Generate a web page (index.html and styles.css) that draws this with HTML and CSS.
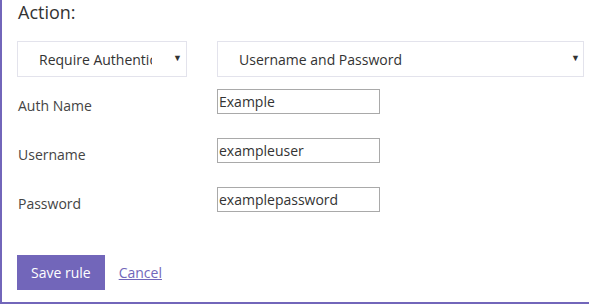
FILE: index.html
```html
<!DOCTYPE html>
<html lang="en">
<head>
    <meta charset="UTF-8">
    <meta name="viewport" content="width=device-width, initial-scale=1.0">
    <title>Rule action</title>
    <link rel="stylesheet" href="styles.css">
</head>
<body>
    <div class="panel">
        <h2 class="panel-title">Action:</h2>

        <div class="select-row">
            <div class="select-wrap narrow">
                <select>
                    <option>Require Authentication</option>
                </select>
            </div>
            <div class="select-wrap wide">
                <select>
                    <option>Username and Password</option>
                </select>
            </div>
        </div>

        <div class="field-row">
            <label>Auth Name</label>
            <input type="text" value="Example">
        </div>
        <div class="field-row">
            <label>Username</label>
            <input type="text" value="exampleuser">
        </div>
        <div class="field-row">
            <label>Password</label>
            <input type="text" value="examplepassword">
        </div>

        <div class="actions">
            <button class="btn-primary">Save rule</button>
            <a href="#" class="link-cancel">Cancel</a>
        </div>
    </div>
</body>
</html>
```

FILE: styles.css
```css
body {
    margin: 0;
    font-family: "Open Sans", "Noto Sans", sans-serif;
    background: white;
    color: #333;
}

.panel {
    box-sizing: border-box;
    height: 304px;
    padding: 0 5px 0 15px;
    border-left: 2px solid #7266ba;
    border-bottom: 2px solid #7266ba;
}

.panel-title {
    margin: 0;
    font-size: 18px;
    font-weight: 400;
    line-height: 24px;
    color: #333;
    padding-left: 1px;
}

/* selects */
.select-row {
    display: grid;
    grid-template-columns: 200px 1fr;
    margin-top: 17px;
}

.select-wrap {
    position: relative;
}

.select-wrap.narrow {
    width: 170px;
}

.select-wrap::after {
    content: "\25BC";
    position: absolute;
    right: 4px;
    top: 12px;
    font-size: 9px;
    line-height: 10px;
    color: #333;
    pointer-events: none;
}

.select-wrap.narrow::after {
    right: 5px;
}

.select-wrap select {
    appearance: none;
    -webkit-appearance: none;
    box-sizing: border-box;
    width: 100%;
    height: 36px;
    margin: 0;
    padding: 0 34px 0 21px;
    border: 1px solid #e3e3ec;
    border-radius: 0;
    background: white;
    font-family: inherit;
    font-size: 14px;
    color: #333;
}

/* fields */
.field-row {
    display: grid;
    grid-template-columns: 200px 1fr;
    align-items: start;
    margin-top: 12px;
}

.field-row + .field-row {
    margin-top: 22px;
}

.field-row label {
    padding: 7px 0 0 1px;
    font-size: 14px;
    line-height: 20px;
    color: #444;
}

.field-row input {
    box-sizing: border-box;
    width: 163px;
    height: 25px;
    margin: 0;
    padding: 0 1px;
    border: 1px solid #a9a9a9;
    font-family: inherit;
    font-size: 14px;
    color: #333;
}

/* buttons */
.actions {
    display: flex;
    align-items: center;
    gap: 14px;
    margin-top: 41px;
}

.btn-primary {
    height: 35px;
    padding: 0 14px;
    border: 0;
    border-radius: 0;
    background: #7266ba;
    color: white;
    font-family: inherit;
    font-size: 14px;
}

.link-cancel {
    color: #7266ba;
    font-size: 14px;
    text-decoration: underline;
}
```
